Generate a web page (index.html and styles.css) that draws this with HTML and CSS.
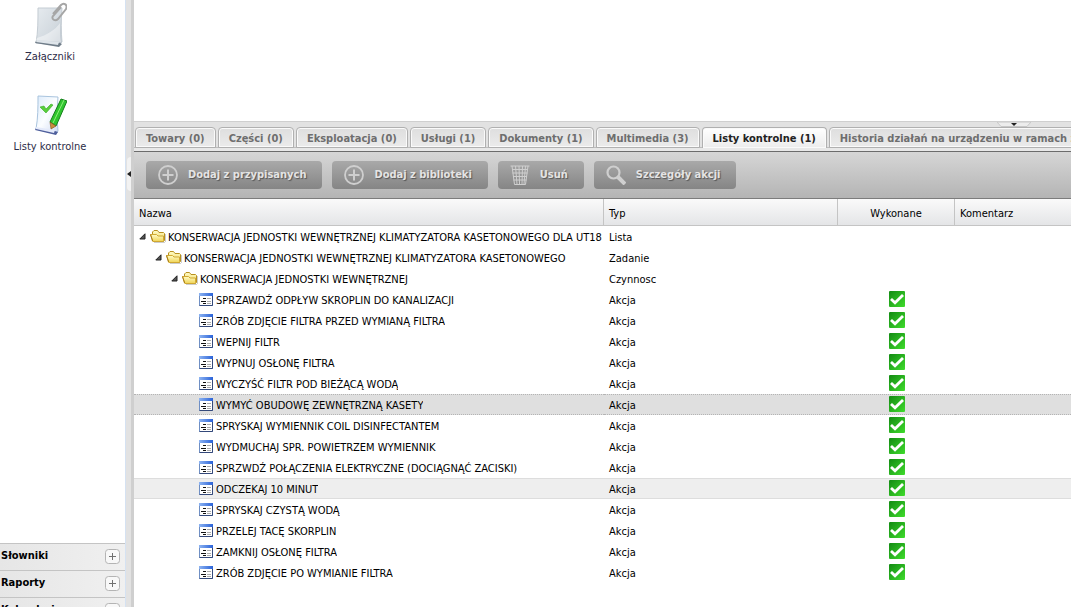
FILE: index.html
```html
<!DOCTYPE html>
<html lang="pl">
<head>
<meta charset="utf-8">
<title>Listy kontrolne</title>
<link rel="stylesheet" href="styles.css">
</head>
<body>
<svg class="defs" aria-hidden="true">
  <defs>
    <linearGradient id="gFolder" x1="0" y1="0" x2="0" y2="1"><stop offset="0" stop-color="#fffcc8"/><stop offset="1" stop-color="#f0d455"/></linearGradient>
    <linearGradient id="gCheck" x1="0" y1="0" x2="1" y2="1"><stop offset="0" stop-color="#138a13"/><stop offset="1" stop-color="#3fdc2c"/></linearGradient>
    <linearGradient id="gPaper" x1="0" y1="0" x2="1" y2="1"><stop offset="0" stop-color="#e6ebef"/><stop offset=".6" stop-color="#d3dae0"/><stop offset="1" stop-color="#b4bec8"/></linearGradient>
    <linearGradient id="gSheet" x1="0" y1="0" x2="1" y2="1"><stop offset="0" stop-color="#dcebfb"/><stop offset=".5" stop-color="#fbfdff"/><stop offset="1" stop-color="#cfdaf2"/></linearGradient>
    <linearGradient id="gForm" x1="0" y1="0" x2="1" y2="0"><stop offset="0" stop-color="#8db4f2"/><stop offset="1" stop-color="#2a62d8"/></linearGradient>
    <symbol id="folder" viewBox="0 0 16 13">
      <path d="M4 12.500h10.500l1-1V4" fill="none" stroke="#999" opacity=".5"/>
      <path d="M2.500 11V2l1.500-1.500h3.500L9 2.500h4.500l1 1v7l-1 1H3z" fill="url(#gFolder)" stroke="#b8901f"/>
      <path d="M.5 4.500h6l1.500 1.500h5.500v4.500l-1 1H3z" fill="url(#gFolder)" stroke="#d0a832"/>
      <path d="M.5 4.500L2.500 11" stroke="#a87c14" fill="none"/>
    </symbol>
    <symbol id="form" viewBox="0 0 14 13">
      <path d="M.5.5h13v12H.5z" fill="#fff" stroke="#6f8fc4"/>
      <path d="M0 0h14v3H0z" fill="url(#gForm)"/>
      <path d="M13.500 3v9.500H.5" fill="none" stroke="#34497a"/>
      <path d="M4 5.500h3M2 8.500h5M4 10.500h3" stroke="#111"/>
      <path d="M8 5.500h4M8 8.500h4M8 10.500h4" stroke="#aaa"/>
    </symbol>
    <symbol id="check" viewBox="0 0 16 16">
      <rect width="16" height="16" rx="1" fill="url(#gCheck)"/>
      <path d="M2 8l4 3.800 8-7.800" fill="none" stroke="#fff" stroke-width="2.800"/>
    </symbol>
    <symbol id="arrow" viewBox="0 0 7 7"><path d="M6 .8V6H.8z" fill="#555" stroke="#222"/></symbol>
    <symbol id="plus" viewBox="0 0 20 20"><circle cx="10" cy="10" r="9" fill="none" stroke="currentColor" stroke-width="1.800"/><path d="M10 4.500v11M4.500 10h11" stroke="currentColor" stroke-width="2"/></symbol>
    <symbol id="bin" viewBox="0 0 20 20"><path d="M.5 1h19M2 1l2.500 18.500h11L18 1M5.500 1l1.500 18M9 1l.5 18M12.500 1l-.5 18M15.500 1l-1.500 18M2 4.500h16M2.500 8h15M3 11.500h14M3.500 15h13" fill="none" stroke="currentColor"/></symbol>
    <symbol id="lens" viewBox="0 0 20 20"><circle cx="7.500" cy="7.500" r="6" fill="none" stroke="currentColor" stroke-width="2.200"/><path d="M12 12l7 7" stroke="currentColor" stroke-width="4"/></symbol>
    <symbol id="expand" viewBox="0 0 15 15"><rect x=".5" y=".5" width="14" height="14" rx="3" fill="#f8f8f8" stroke="#b4b4b4"/><path d="M7.500 4v7M4 7.500h7" stroke="#707070"/></symbol>
  </defs>
</svg>
<div class="app">
  <aside class="sidebar">
    <nav class="shortcuts">
      <a class="shortcut" href="#zalaczniki">
        <svg width="34" height="46" viewBox="0 0 34 46" aria-hidden="true">
          <path d="M5 6h24c-1 12-1 24 0 34l-3 3-23-2c2-11 2-23 2-35z" fill="url(#gPaper)" stroke="#c4ccd3"/>
          <path d="M4 36c10-3 18-8 23-15 0 8 0 13 1 19L3 38z" fill="#fff" opacity=".45"/>
          <path d="M3 39l24 2 2 1-3 3-24-4z" fill="#6f7c88"/><path d="M4 38l22 2-1 3-22-3z" fill="#dfe5ea"/>
          <path d="M20 12l8-9c3-3 7 0 5 4l-8 10c-3 3-7 0-5-3l8-9" fill="none" stroke="#a6a6a6" stroke-width="2"/>
        </svg>
        <span>Załączniki</span>
      </a>
      <a class="shortcut" href="#listy">
        <svg width="34" height="42" viewBox="0 0 34 42" aria-hidden="true">
          <path d="M5 2l20 1c-1 12-1 24 0 34l-2 3-20-5c2-11 2-22 2-33z" fill="url(#gSheet)" stroke="#a9c4de"/>
          <path d="M3 34l19 3 3 1-2 3-21-5z" fill="#4f5f9c"/><path d="M3 33l19 3-1 3-18-4z" fill="#e4eafa"/>
          <path d="M7 13l4-1 2 3 5-5 2 1-7 8z" fill="#58cf3a" stroke="#35a828" stroke-width=".6"/>
          <path d="M28 5l6 2-11 25-6-4z" fill="#2fc52f" stroke="#14801a"/><path d="M31 6L20 29" stroke="#8df07a"/>
          <path d="M17 28l6 4-5 3z" fill="#c98d3e" stroke="#7a4b14" stroke-width=".6"/>
        </svg>
        <span>Listy kontrolne</span>
      </a>
    </nav>
    <div class="sections">
      <button class="section" type="button"><span>Słowniki</span><svg width="15" height="15"><use href="#expand"/></svg></button>
      <button class="section" type="button"><span>Raporty</span><svg width="15" height="15"><use href="#expand"/></svg></button>
      <button class="section" type="button"><span>Kalendarium</span><svg width="15" height="15"><use href="#expand"/></svg></button>
    </div>
  </aside>
  <div class="splitter">
    <button class="grip" type="button" aria-label="Zwiń panel"><svg width="4" height="6"><path d="M4 0v6L0 3z" fill="#222"/></svg></button>
  </div>
  <main class="main">
    <div class="preview"></div>
    <div class="divider"><button class="fold" type="button" aria-label="Zwiń"><svg width="34" height="5"><path d="M0 0h34l-4 4.500H4z" fill="#ededed" stroke="#c8c8c8"/><path d="M14 1h6l-3 3z" fill="#222"/></svg></button></div>
    <nav class="tabs">
      <button class="tab" type="button">Towary (0)</button>
      <button class="tab" type="button">Części (0)</button>
      <button class="tab" type="button">Eksploatacja (0)</button>
      <button class="tab" type="button">Usługi (1)</button>
      <button class="tab" type="button">Dokumenty (1)</button>
      <button class="tab" type="button">Multimedia (3)</button>
      <button class="tab active" type="button">Listy kontrolne (1)</button>
      <button class="tab" type="button">Historia działań na urządzeniu w ramach zlecenia</button>
    </nav>
    <div class="toolbar">
      <button class="tool" type="button"><svg width="20" height="20"><use href="#plus"/></svg>Dodaj z przypisanych</button>
      <button class="tool" type="button"><svg width="20" height="20"><use href="#plus"/></svg>Dodaj z biblioteki</button>
      <button class="tool" type="button"><svg width="20" height="20"><use href="#bin"/></svg>Usuń</button>
      <button class="tool" type="button"><svg width="20" height="20"><use href="#lens"/></svg>Szczegóły akcji</button>
    </div>
    <table class="grid">
      <colgroup><col class="c-name"><col class="c-type"><col class="c-done"><col></colgroup>
      <thead><tr><th>Nazwa</th><th>Typ</th><th class="mid">Wykonane</th><th>Komentarz</th></tr></thead>
      <tbody id="rows"></tbody>
    </table>
  </main>
</div>
<script src="rows.js"></script>
</body>
</html>
```
FILE: rows.js
```js
const groups = [
  ["KONSERWACJA JEDNOSTKI WEWNĘTRZNEJ KLIMATYZATORA KASETONOWEGO DLA UT18", "Lista"],
  ["KONSERWACJA JEDNOSTKI WEWNĘTRZNEJ KLIMATYZATORA KASETONOWEGO", "Zadanie"],
  ["KONSERWACJA JEDNOSTKI WEWNĘTRZNEJ", "Czynnosc"]
];
const actions = [
  "SPRZAWDŹ ODPŁYW SKROPLIN DO KANALIZACJI",
  "ZRÓB ZDJĘCIE FILTRA PRZED WYMIANĄ FILTRA",
  "WEPNIJ FILTR",
  "WYPNUJ OSŁONĘ FILTRA",
  "WYCZYŚĆ FILTR POD BIEŻĄCĄ WODĄ",
  "WYMYĆ OBUDOWĘ ZEWNĘTRZNĄ KASETY",
  "SPRYSKAJ WYMIENNIK COIL DISINFECTANTEM",
  "WYDMUCHAJ SPR. POWIETRZEM WYMIENNIK",
  "SPRZWDŹ POŁĄCZENIA ELEKTRYCZNE (DOCIĄGNĄĆ ZACISKI)",
  "ODCZEKAJ 10 MINUT",
  "SPRYSKAJ CZYSTĄ WODĄ",
  "PRZELEJ TACĘ SKORPLIN",
  "ZAMKNIJ OSŁONĘ FILTRA",
  "ZRÓB ZDJĘCIE PO WYMIANIE FILTRA"
];
const icon = (id, w, h) => `<svg class="i-${id}" width="${w}" height="${h}"><use href="#${id}"/></svg>`;
const groupRows = groups.map(([name, type], i) =>
  `<tr><td><div class="node level-${i}">${icon("arrow", 7, 7)}${icon("folder", 16, 13)}<span>${name}</span></div></td><td>${type}</td><td></td><td></td></tr>`);
const actionRows = actions.map((name, i) => {
  const state = i === 5 ? "selected" : i === 9 ? "hover" : "";
  return `<tr class="${state}"><td><div class="node leaf">${icon("form", 14, 13)}<span>${name}</span></div></td><td>Akcja</td><td class="mid">${icon("check", 16, 16)}</td><td></td></tr>`;
});
document.getElementById("rows").innerHTML = groupRows.concat(actionRows).join("");
```
FILE: styles.css
```css
* { box-sizing: border-box; }
body { margin: 0; font: 11px/14px "DejaVu Sans Condensed", "Noto Sans", sans-serif; color: #000; background: #fff; }
button { font: inherit; color: inherit; margin: 0; padding: 0; border: 0; background: none; }
svg { display: block; flex: none; }
.defs { position: absolute; width: 0; height: 0; }
.app { display: flex; height: 100vh; overflow: hidden; }
.sidebar { flex: none; width: 125px; display: flex; flex-direction: column; justify-content: space-between; }
.shortcuts { display: flex; flex-direction: column; gap: 30px; width: 100px; padding-top: 2px; }
.shortcut { display: flex; flex-direction: column; align-items: center; gap: 2px; color: #2c2c48; text-decoration: none; white-space: nowrap; }
.shortcut + .shortcut { gap: 4px; }
.sections { height: 64px; overflow: hidden; }
.section { display: flex; align-items: center; justify-content: space-between; width: 100%; height: 27px; padding: 0 5px 2px 1px; border-top: 1px solid #c4c4c4; background: linear-gradient(90deg, #e6e6e6, #f0f0f0); font-weight: bold; }
.splitter { flex: none; width: 9px; display: flex; align-items: flex-start; background: #e2e2e2; border-left: 1px solid #d5e2f2; border-right: 3px solid #cfcfcf; padding: 157px 0 0 1px; }
.grip { display: flex; align-items: center; width: 4px; height: 34px; background: #f2f2f2; border-radius: 4px 0 0 4px; }
.main { flex: 1; min-width: 0; }
.preview { height: 121px; }
.divider { display: flex; justify-content: flex-end; height: 6px; padding-right: 40px; border-top: 1px solid #cfcfcf; background: #e2e2e2; }
.fold { height: 5px; }
.tabs { display: flex; gap: 2px; padding: 0 1px; height: 24px; background: linear-gradient(#e2e2e2 20px, #bdbdbd 20px, #bdbdbd 21px, #e8e8e8 21px); overflow: hidden; }
.tab { flex: none; height: 21px; padding: 2px 10px 0; border: 1px solid #b0b0b0; border-radius: 4px 4px 0 0; background: linear-gradient(#dedede, #ebebeb); box-shadow: inset 0 0 0 1px #fafafa; color: #6e6e6e; font-weight: bold; white-space: nowrap; }
.tab.active { border-bottom: 0; background: linear-gradient(#fff, #ececec); color: #222; }
.toolbar { display: flex; align-items: center; gap: 10px; height: 48px; padding: 0 12px; border-top: 1px solid #6c6c6c; border-bottom: 1px solid #7c7c7c; background: linear-gradient(#d6d6d6, #b4b4b4); }
.tool { display: flex; align-items: center; gap: 10px; height: 28px; padding: 0 16px 0 12px; border-radius: 4px; background: linear-gradient(#a9a9a9, #858585); color: #e4e4e4; font-weight: bold; text-shadow: 1px 1px 1px #555; white-space: nowrap; }
.tool svg { color: #cfcfcf; }
.grid { width: 100%; table-layout: fixed; border-collapse: separate; border-spacing: 0; }
.c-name { width: 470px; }
.c-type { width: 234px; }
.c-done { width: 117px; }
th { height: 27px; padding: 3px 5px 0; border-right: 1px solid #c4c4c4; border-bottom: 1px solid #c4c4c4; background: linear-gradient(#fafafa, #e4e5e7); font-weight: normal; text-align: left; }
td { height: 21px; padding: 2px 5px 0; overflow: hidden; white-space: nowrap; }
td:first-child { padding: 2px 0 0; }
th:last-child { border-right: 0; }
.mid { text-align: center; }
td.mid { vertical-align: top; }
td.mid svg { margin: 0 auto; }
.node { display: flex; align-items: center; gap: 2px; overflow: hidden; }
.node span { overflow: hidden; }
.node svg { margin-bottom: 2px; }
.node .i-arrow { margin: 0 2px 3px 0; }
.level-0 { padding-left: 5px; }
.level-1 { padding-left: 21px; }
.level-2 { padding-left: 37px; }
.leaf { padding-left: 65px; gap: 3px; }
.selected td { background: #dfdfdf; border-top: 1px dotted #b4b4b4; border-bottom: 1px dotted #b4b4b4; }
.hover td { background: #eee; border-top: 1px solid #ddd; border-bottom: 1px solid #ddd; }
.selected .mid, .hover .mid { padding-top: 1px; }
```
